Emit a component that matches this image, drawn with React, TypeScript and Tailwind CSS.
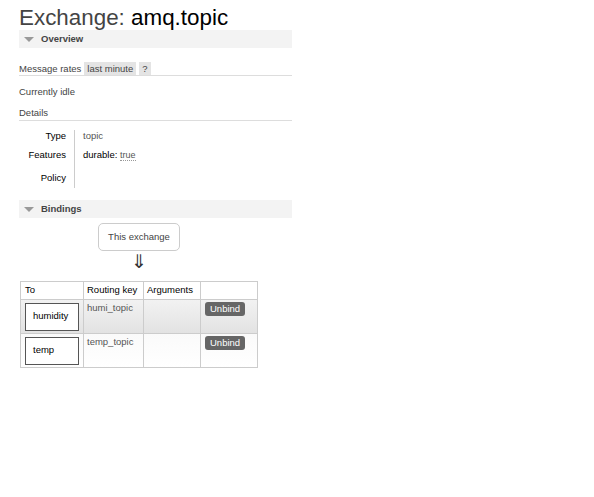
const font = { fontFamily: '"Liberation Sans", Arial, sans-serif' };

function SectionHeader({ title }: { title: string }) {
  return (
    <div className="flex items-center h-[18px] bg-[#f3f3f3] pl-[5px]">
      <span className="w-0 h-0 border-l-[5px] border-r-[5px] border-t-[5px] border-l-transparent border-r-transparent border-t-[#999]" />
      <span className="ml-[7px] text-[9.5px] font-bold text-[#444]">{title}</span>
    </div>
  );
}

const bindings = [
  { to: "humidity", key: "humi_topic", bg: "bg-gradient-to-b from-[#f2f2f2] to-[#e2e2e2]" },
  { to: "temp", key: "temp_topic", bg: "bg-gradient-to-b from-[#fafafa] to-[#ffffff]" },
];

export default function App() {
  return (
    <div style={font} className="w-[594px] h-[497px] bg-white text-[#444] pl-[19px] pt-[6px]">
      <div className="w-[273px]">
        <h1 className="text-[22.4px] leading-[24px] text-[#444]">
          Exchange: <span className="text-black">amq.topic</span>
        </h1>

        {/* Overview */}
        <div>
          <SectionHeader title="Overview" />
          <div className="mt-[14px] flex items-end h-[13px] text-[9.5px] border-b border-[#ddd] box-content">
            <span className="leading-[13px]">Message rates</span>
            <span className="ml-[3px] bg-[#e4e4e4] px-[3px] leading-[13px] h-[13px]">last minute</span>
            <span className="ml-[3px] bg-[#e4e4e4] px-[3px] leading-[13px] h-[13px]">?</span>
          </div>
          <p className="mt-[10px] text-[9.5px] leading-[12px]">Currently idle</p>
          <p className="mt-[9px] text-[9.5px] leading-[12px] pb-[1px] border-b border-[#ddd]">Details</p>

          <div className="flex mt-[9px] text-[9.5px]">
            <div className="w-[47px] text-right text-black flex flex-col">
              <span className="h-[19px] leading-[12px]">Type</span>
              <span className="h-[23px] leading-[12px]">Features</span>
              <span className="h-[17px] leading-[12px]">Policy</span>
            </div>
            <div className="ml-[8px] border-l border-[#ccc] pl-[8px] h-[58px] flex flex-col">
              <span className="h-[19px] leading-[12px] text-[#555]">topic</span>
              <span className="h-[23px] leading-[12px] text-black">
                durable: <span className="text-[#555] text-[9px] border-b border-dotted border-[#999]">true</span>
              </span>
            </div>
          </div>
        </div>

        {/* Bindings */}
        <div className="mt-[11px]">
          <SectionHeader title="Bindings" />
          <div className="flex flex-col items-center w-[240px] mt-[5px]">
            <div className="border border-[#ccc] rounded-[5px] px-[9px] h-[28px] flex items-center text-[9.5px] text-[#444]">
              This exchange
            </div>
            <div className="text-[19px] leading-[20px] text-[#333] mt-[1px]">⇓</div>
          </div>
          <table className="mt-[9px] ml-[1px] border-collapse text-[9.5px]">
            <thead>
              <tr className="h-[18px]">
                <th className="border border-[#ccc] w-[63px] font-normal text-left text-black px-[4px]">To</th>
                <th className="border border-[#ccc] w-[60px] font-normal text-left text-black px-[3px]">Routing key</th>
                <th className="border border-[#ccc] w-[57px] font-normal text-left text-black px-[3px]">Arguments</th>
                <th className="border border-[#ccc] w-[57px]"></th>
              </tr>
            </thead>
            <tbody>
              {bindings.map((b) => (
                <tr key={b.to} className={`h-[34px] ${b.bg}`}>
                  <td className="border border-[#ccc] px-[4px] align-middle">
                    <div className="border border-[#555] bg-white h-[28px] w-[54px] flex items-center pl-[7px] text-black">
                      {b.to}
                    </div>
                  </td>
                  <td className="border border-[#ccc] px-[3px] align-top pt-[1px] text-[#555]">{b.key}</td>
                  <td className="border border-[#ccc]"></td>
                  <td className="border border-[#ccc] align-top pt-[2px] px-[4px]">
                    <span className="inline-block bg-[#666] text-white rounded-[3px] px-[5px] h-[14px] leading-[14px]">
                      Unbind
                    </span>
                  </td>
                </tr>
              ))}
            </tbody>
          </table>
        </div>
      </div>
    </div>
  );
}
